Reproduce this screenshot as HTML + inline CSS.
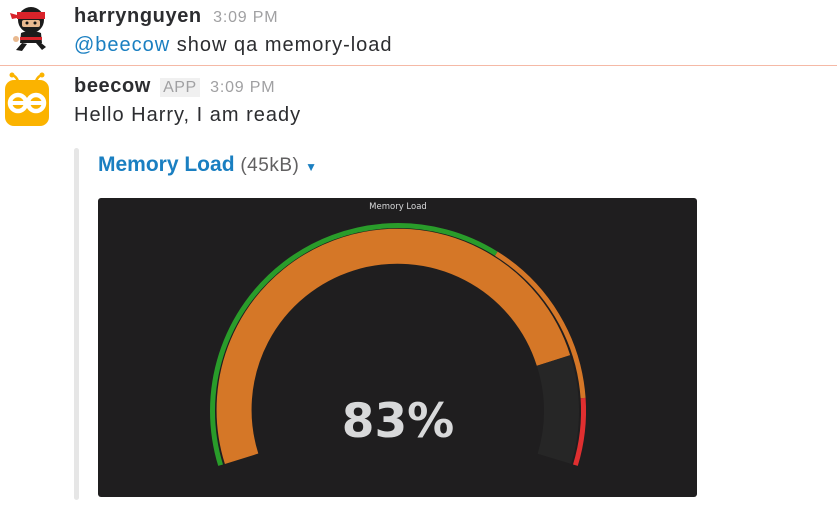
<!DOCTYPE html>
<html><head><meta charset="utf-8"><style>
body{margin:0;width:837px;height:520px;background:#fff;font-family:"Liberation Sans",sans-serif;position:relative;overflow:hidden;color:#2c2d30}
.a{position:absolute;white-space:nowrap}
.n{font-weight:bold;font-size:20px;letter-spacing:0.6px;color:#2c2d30}
.t{font-size:16px;letter-spacing:0.8px;color:#a0a0a2;font-weight:normal}
.m{font-size:20px;letter-spacing:1px;color:#2c2d30}
</style></head><body>
<svg class="a" style="left:8px;top:3px" width="46" height="50" viewBox="0 0 46 50">
<ellipse cx="23" cy="17" rx="13" ry="13" fill="#1b1b1b"/>
<rect x="9" y="9" width="28" height="7" fill="#d9232a"/>
<path d="M9 12 L2 10 L4 16 L9 15Z" fill="#d9232a"/>
<rect x="14" y="17" width="18" height="7" rx="2" fill="#e9b98f"/>
<circle cx="19" cy="20" r="1.5" fill="#111"/><circle cx="27" cy="20" r="1.5" fill="#111"/>
<path d="M13 30 Q23 26 33 30 L34 40 L12 40Z" fill="#1b1b1b"/>
<rect x="12" y="34" width="22" height="3" fill="#d9232a"/>
<path d="M14 40 L8 47 L14 48 L19 41Z M28 40 L34 47 L38 44 L32 39Z" fill="#1b1b1b"/>
<circle cx="8" cy="36" r="3" fill="#e9b98f"/>
</svg>
<div class="a n" style="left:74px;top:5px">harrynguyen <span class="t">&nbsp;3:09 PM</span></div>
<div class="a m" style="left:74px;top:34px"><span style="color:#1a7fc1">@beecow</span> show qa memory-load</div>
<div class="a" style="left:0;top:65px;width:837px;height:1px;background:#f5b9a6"></div>
<svg class="a" style="left:4px;top:72px" width="46" height="56" viewBox="0 0 46 56">
<path d="M14 9 Q12 4 8 3 M32 9 Q34 4 38 3" stroke="#fbb300" stroke-width="2.5" fill="none"/>
<circle cx="8" cy="3" r="2.5" fill="#fbb300"/><circle cx="38" cy="3" r="2.5" fill="#fbb300"/>
<rect x="1" y="8" width="44" height="46" rx="9" fill="#fbb300"/>
<circle cx="14" cy="31" r="8" fill="none" stroke="#fff" stroke-width="4.5"/>
<circle cx="32" cy="31" r="8" fill="none" stroke="#fff" stroke-width="4.5"/>
<rect x="6" y="29" width="34" height="4" fill="#fff"/>
</svg>
<div class="a n" style="left:74px;top:75px">beecow <span style="font-weight:normal;font-size:16px;letter-spacing:0.5px;color:#a0a0a2;background:#f0f0f0;padding:1px 3px;margin-left:3px">APP</span><span class="t">&nbsp; 3:09 PM</span></div>
<div class="a m" style="left:74px;top:104px">Hello Harry, I am ready</div>
<div class="a" style="left:74px;top:148px;width:5px;height:352px;background:#e6e6e6;border-radius:3px"></div>
<div class="a" style="left:98px;top:153px;font-size:21px;color:#1a7fc1;font-weight:bold">Memory Load <span style="font-weight:normal;font-size:19px;letter-spacing:0.5px;color:#616061">(45kB)</span> <span style="font-size:12px;color:#1a7fc1">&#9660;</span></div>
<div class="a" style="left:98px;top:198px;width:599px;height:299px;background:#1f1e1f;border-radius:3px"></div>
<svg class="a" style="left:0;top:0" width="837" height="520">
<text x="398" y="209" font-family="DejaVu Sans" font-size="8.5" fill="#d8d9da" text-anchor="middle">Memory Load</text>
<g fill="none" stroke-width="5">
<path d="M220.6 465.2 A185.5 185.5 0 0 1 496.3 253.7" stroke="#299c2a"/>
<path d="M496.3 253.7 A185.5 185.5 0 0 1 583.1 398.1" stroke="#d57727"/>
<path d="M583.1 398.1 A185.5 185.5 0 0 1 575.4 465.2" stroke="#e02f30"/>
</g>
<g fill="none" stroke-width="35">
<path d="M241.6 458.8 A163.5 163.5 0 0 1 553.5 360.5" stroke="#d57727"/>
<path d="M553.5 360.5 A163.5 163.5 0 0 1 554.4 458.8" stroke="#262626"/>
</g>
<text x="398" y="437" font-family="DejaVu Sans" font-weight="bold" font-size="47" fill="#d8d9da" text-anchor="middle">83%</text>
</svg>
</body></html>
